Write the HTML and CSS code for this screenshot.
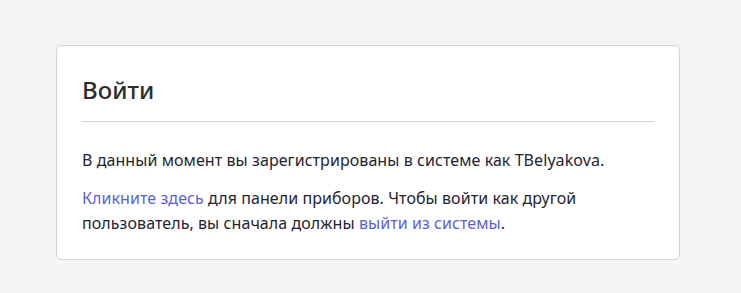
FILE: index.html
```html
<!DOCTYPE html>
<html lang="ru">
<head>
<meta charset="utf-8">
<link rel="stylesheet" href="styles.css">
</head>
<body>
<div class="page">
  <div class="card">
    <h1 class="title">Войти</h1>
    <hr class="divider">
    <p class="text">В данный момент вы зарегистрированы в системе как TBelyakova.</p>
    <p class="text"><a class="link" href="#">Кликните здесь</a> для панели приборов. Чтобы войти как другой пользователь, вы сначала должны <a class="link" href="#">выйти из системы</a>.</p>
  </div>
</div>
</body>
</html>
```

FILE: styles.css
```css
html, body {
  margin: 0;
  padding: 0;
  background: #f3f4f6;
  font-family: "Noto Sans", "Open Sans", sans-serif;
}
.page {
  padding: 45px 60px 0 56px;
}
.card {
  width: 572px;
  background: #fff;
  border: 1px solid #d1d5db;
  border-radius: 6px;
  padding: 26px 25px 23px 25px;
}
.title {
  margin: 0;
  font-size: 24px;
  font-weight: 500;
  line-height: 36px;
  color: #2d2d2d;
}
.divider {
  border: 0;
  border-top: 1px solid #d1d5db;
  margin: 13px 0 26px;
}
.text {
  margin: 0 0 13px;
  font-size: 16px;
  line-height: 25px;
  letter-spacing: 0.07px;
  color: #1f2430;
}
.text:last-child { margin-bottom: 0; }
.link {
  color: #5a5fe2;
  text-decoration: none;
}
```
